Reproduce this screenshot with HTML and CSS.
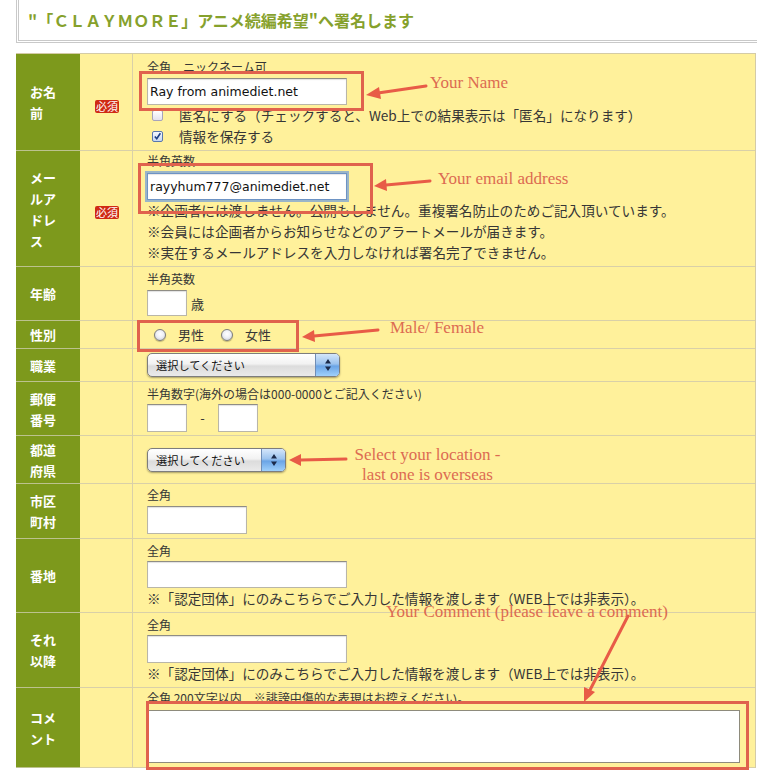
FILE: index.html
```html
<!DOCTYPE html>
<html lang="ja">
<head>
<meta charset="utf-8">
<title>署名フォーム</title>
<link rel="stylesheet" href="styles.css">
</head>
<body>
<div class="page">
  <div class="heading"><h1>"「ＣＬＡＹＭＯＲＥ」アニメ続編希望"へ署名します</h1></div>

  <div class="form">
    <!-- row 1 -->
    <div class="lbl r1">お名<br>前</div>
    <div class="req"><span class="badge">必須</span></div>
    <div class="fld p5">
      <div class="hint">全角　ニックネーム可</div>
      <input class="txt w200 mt3" type="text" value="Ray from animediet.net">
      <div class="check"><span class="cb"></span>匿名にする（チェックすると、Web上での結果表示は「匿名」になります）</div>
      <div class="check"><span class="cb on"><svg viewBox="0 0 11 11" width="11" height="11"><path d="M2.2 5.4 L4.6 8.2 L9 1.6" fill="none" stroke="#1c3f86" stroke-width="2"/></svg></span>情報を保存する</div>
    </div>

    <!-- row 2 -->
    <div class="lbl">メー<br>ルア<br>ドレ<br>ス</div>
    <div class="req"><span class="badge">必須</span></div>
    <div class="fld p2">
      <div class="hint">半角英数</div>
      <input class="txt w200 mt4 focus" type="text" value="rayyhum777@animediet.net">
      <div class="note">※企画者には渡しません。公開もしません。重複署名防止のためご記入頂いています。</div>
      <div class="note">※会員には企画者からお知らせなどのアラートメールが届きます。</div>
      <div class="note">※実在するメールアドレスを入力しなければ署名完了できません。</div>
    </div>

    <!-- row 3 -->
    <div class="lbl">年齢</div>
    <div class="req"></div>
    <div class="fld p4">
      <div class="hint">半角英数</div>
      <div class="inline mt3"><input class="txt w40 h26" type="text"><span class="unit">歳</span></div>
    </div>

    <!-- row 4 -->
    <div class="lbl">性別</div>
    <div class="req"></div>
    <div class="fld mid">
      <span class="radio"></span><span class="rlbl">男性</span>
      <span class="radio"></span><span class="rlbl">女性</span>
    </div>

    <!-- row 5 -->
    <div class="lbl">職業</div>
    <div class="req"></div>
    <div class="fld mid">
      <div class="select w193"><span class="sel-text">選択してください</span><span class="sel-btn"><svg viewBox="0 0 8 14" width="8" height="14"><path d="M4 1 L7 5.5 H1 Z M4 13 L7 8.5 H1 Z" fill="#1b2a4a"/></svg></span></div>
    </div>

    <!-- row 6 -->
    <div class="lbl">郵便<br>番号</div>
    <div class="req"></div>
    <div class="fld p4">
      <div class="hint">半角数字(海外の場合は000-0000とご記入ください)</div>
      <div class="inline mt2"><input class="txt w40 h28" type="text"><span class="dash">-</span><input class="txt w40 h28" type="text"></div>
    </div>

    <!-- row 7 -->
    <div class="lbl">都道<br>府県</div>
    <div class="req"></div>
    <div class="fld mid">
      <div class="select w139"><span class="sel-text">選択してください</span><span class="sel-btn"><svg viewBox="0 0 8 14" width="8" height="14"><path d="M4 1 L7 5.5 H1 Z M4 13 L7 8.5 H1 Z" fill="#1b2a4a"/></svg></span></div>
    </div>

    <!-- row 8 -->
    <div class="lbl">市区<br>町村</div>
    <div class="req"></div>
    <div class="fld p3">
      <div class="hint">全角</div>
      <input class="txt w100 h28 mt3" type="text">
    </div>

    <!-- row 9 -->
    <div class="lbl">番地</div>
    <div class="req"></div>
    <div class="fld p4">
      <div class="hint">全角</div>
      <input class="txt w200 mt2" type="text">
      <div class="note">※「認定団体」にのみこちらでご入力した情報を渡します（WEB上では非表示）。</div>
    </div>

    <!-- row 10 -->
    <div class="lbl">それ<br>以降</div>
    <div class="req"></div>
    <div class="fld p4">
      <div class="hint">全角</div>
      <input class="txt w200 h28 mt2" type="text">
      <div class="note">※「認定団体」にのみこちらでご入力した情報を渡します（WEB上では非表示）。</div>
    </div>

    <!-- row 11 -->
    <div class="lbl">コメ<br>ント</div>
    <div class="req"></div>
    <div class="fld p2">
      <div class="hint">全角 200文字以内　※誹謗中傷的な表現はお控えください。</div>
      <textarea class="area"></textarea>
    </div>
  </div>

  <!-- annotations drawn over the screenshot -->
  <svg class="marks" width="781" height="782" viewBox="0 0 781 782">
    <g fill="none" stroke="#e0624d" stroke-width="3">
      <rect x="140.5" y="72.5" width="222" height="37"/>
      <rect x="139.5" y="164.5" width="232" height="48"/>
      <rect x="138.5" y="321.5" width="159" height="29"/>
      <rect x="147.5" y="702.5" width="600" height="66"/>
    </g>
    <g stroke="#e85b47" stroke-width="3" stroke-linecap="round">
      <line x1="426" y1="86" x2="378" y2="93"/>
      <line x1="430" y1="181" x2="386" y2="185"/>
      <line x1="378" y1="330" x2="314" y2="336"/>
      <line x1="346" y1="459" x2="301" y2="460"/>
      <line x1="628" y1="616" x2="590" y2="690"/>
    </g>
    <g fill="#e85b47">
      <polygon points="366,95 379,87 381,99"/>
      <polygon points="374,186 386,179 387,191"/>
      <polygon points="302,337 314,330 315,342"/>
      <polygon points="289,460 301,454 301,466"/>
      <polygon points="584,702 584,687 595,692"/>
    </g>
  </svg>
  <div class="ann a-name">Your Name</div>
  <div class="ann a-mail">Your email address</div>
  <div class="ann a-sex">Male/ Female</div>
  <div class="ann a-loc">Select your location -<br>last one is overseas</div>
  <div class="ann a-com">Your Comment (please leave a comment)</div>
</div>
</body>
</html>
```
FILE: styles.css
```css
html, body {
  margin: 0;
  padding: 0;
  background: #ffffff;
}
body {
  font-family: "Noto Sans CJK JP", "Noto Sans", sans-serif;
  color: #363636;
}
.page {
  position: relative;
  width: 781px;
  height: 782px;
  padding-left: 16px;
  box-sizing: border-box;
  overflow: hidden;
}
.heading {
  width: 729px;
  height: 40px;
  border-left: 3px double #c9c9c9;
  border-bottom: 3px double #c9c9c9;
  display: flex;
  align-items: center;
  padding-left: 9px;
  box-sizing: content-box;
}
.heading h1 {
  margin: 0;
  font-size: 16px;
  font-weight: bold;
  color: #86a12c;
  line-height: 20px;
  white-space: nowrap;
}
.form {
  margin-top: 10px;
  width: 740px;
  box-sizing: border-box;
  border-top: 1px solid #d4cba6;
  border-right: 1px solid #d4cba6;
  display: grid;
  grid-template-columns: 64px 53px 1fr;
  grid-template-rows: 97px 116px 54px 28px 33px 54px 48px 55px 74px 75px 80px;
  background: #fff19b;
}
.form > div {
  box-sizing: border-box;
  border-bottom: 1px solid #d9d0a8;
}
.lbl {
  background: #7d991c;
  color: #ffffff;
  font-size: 13px;
  font-weight: bold;
  line-height: 21px;
  padding-left: 14px;
  display: flex;
  flex-direction: column;
  justify-content: center;
  border-bottom-color: #bcc28e !important;
}
.req {
  border-right: 1px solid #d9d0a8;
  display: flex;
  align-items: center;
  padding-left: 15px;
}
.badge {
  display: inline-block;
  background: #cf2a14;
  color: #ffffff;
  font-size: 11px;
  line-height: 13px;
  height: 13px;
  padding: 0 1px;
  border-radius: 2px;
  margin-top: 8px;
}
.fld {
  padding-left: 14px;
}
.p2 { padding-top: 2px; }
.p3 { padding-top: 3px; }
.p4 { padding-top: 4px; }
.p5 { padding-top: 5px; }
.mid {
  display: flex;
  align-items: center;
}
.hint {
  font-size: 12px;
  line-height: 16px;
  white-space: nowrap;
}
.note {
  font-size: 13.6px;
  line-height: 21px;
  white-space: nowrap;
}
.check {
  font-size: 13.6px;
  line-height: 21px;
  white-space: nowrap;
  display: flex;
  align-items: center;
}
.txt {
  display: block;
  box-sizing: border-box;
  height: 27px;
  margin: 0;
  padding: 0 2px;
  border: 1px solid #b9b6a8;
  border-top-color: #8f8d85;
  background: #ffffff;
  box-shadow: inset 0 1px 1px rgba(0,0,0,0.12);
  font-family: "DejaVu Sans", sans-serif;
  font-size: 12.5px;
  color: #111;
  outline: none;
}
.txt.focus {
  border-color: #6d93c4;
  box-shadow: 0 0 0 2px rgba(120,160,215,0.75), inset 0 1px 1px rgba(0,0,0,0.1);
}
.w200 { width: 200px; }
.w100 { width: 100px; }
.w40 { width: 40px; }
.h26 { height: 26px; }
.h28 { height: 28px; }
.mt2 { margin-top: 2px; }
.mt3 { margin-top: 3px; }
.mt4 { margin-top: 4px; }
.inline {
  display: flex;
  align-items: flex-end;
}
.unit {
  font-size: 13px;
  line-height: 16px;
  margin-left: 4px;
  margin-bottom: 4px;
}
.dash {
  font-size: 13px;
  line-height: 16px;
  width: 31px;
  text-align: center;
  margin-bottom: 6px;
}
.cb {
  width: 11px;
  height: 11px;
  box-sizing: border-box;
  border: 1px solid #a7a3bb;
  border-radius: 2px;
  background: linear-gradient(#ffffff, #e4e2ef);
  margin-left: 5px;
  margin-right: 16px;
  display: inline-flex;
  align-items: center;
  justify-content: center;
  overflow: visible;
}
.cb.on {
  border-color: #5877ad;
  background: linear-gradient(#f4f8ff, #c7d8f2);
}
.cb svg { display: block; }
.radio {
  width: 12px;
  height: 12px;
  box-sizing: border-box;
  border-radius: 50%;
  border: 1px solid #7c7c7c;
  background: radial-gradient(circle at 50% 40%, #ffffff 0%, #eef0f6 45%, #c2c6d0 100%);
  box-shadow: 0 1px 1px rgba(0,0,0,0.25);
  margin-left: 7px;
}
.radio + .rlbl {
  margin-left: 12px;
}
.rlbl {
  font-size: 13px;
  line-height: 16px;
  margin-right: 10px;
}
.select {
  height: 24px;
  box-sizing: border-box;
  border: 1px solid #7d7d7d;
  border-radius: 5px;
  background: linear-gradient(#ffffff 0%, #f2f2f2 45%, #dcdcdc 55%, #eaeaea 100%);
  box-shadow: 0 1px 2px rgba(0,0,0,0.35);
  display: flex;
  align-items: stretch;
  overflow: hidden;
}
.w193 { width: 193px; }
.w139 { width: 139px; }
.sel-text {
  flex: 1;
  font-size: 11.2px;
  line-height: 22px;
  padding-left: 8px;
  color: #111;
  white-space: nowrap;
}
.sel-btn {
  width: 23px;
  border-left: 1px solid #6f8db6;
  background: linear-gradient(#d4e6fa 0%, #9cc3ee 45%, #6aa4e6 55%, #9fd0fb 100%);
  display: flex;
  align-items: center;
  justify-content: center;
}
.sel-btn svg { display: block; }
.area {
  display: block;
  box-sizing: border-box;
  width: 593px;
  height: 53px;
  margin: 4px 0 0 0;
  border: 1px solid #8e8b7c;
  background: #ffffff;
  resize: none;
  outline: none;
}
.marks {
  position: absolute;
  left: 0;
  top: 0;
  pointer-events: none;
}
.ann {
  position: absolute;
  font-family: "Liberation Serif", "Times New Roman", serif;
  font-size: 17px;
  line-height: 20px;
  color: #dc6b52;
  white-space: nowrap;
}
.a-name { left: 430px; top: 73px; }
.a-mail { left: 438px; top: 169px; }
.a-sex { left: 390px; top: 318px; }
.a-loc { left: 345px; top: 445px; width: 165px; text-align: center; }
.a-com { left: 386px; top: 602px; }
```
